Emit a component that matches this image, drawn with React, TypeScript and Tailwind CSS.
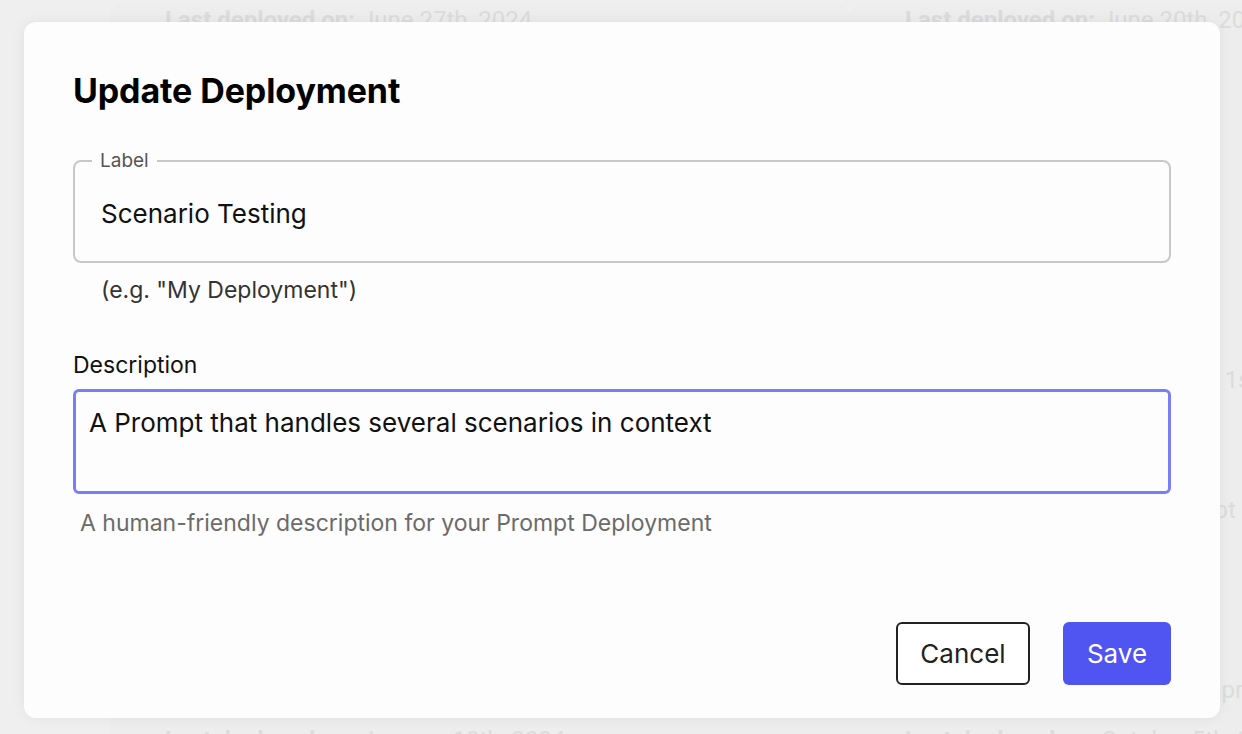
import React from "react";

const bgText = "text-[24px] leading-[32px] text-[#dcdcdc] font-['Roboto',sans-serif] whitespace-nowrap";

function Backdrop() {
  return (
    <div className="absolute inset-0 overflow-hidden bg-[#efefef]">
      <div className="grid grid-cols-[740px_740px] pl-[110px] mt-[4px]">
        <div className="flex flex-col justify-between h-[752px] pl-[55px] rounded-xl bg-[#ededed]">
          <p className={bgText}>
            <span className="font-bold">Last deployed on:</span> June 27th, 2024
          </p>
          <p className={bgText}>
            <span className="font-bold">Last deployed on:</span> January 18th, 2024
          </p>
        </div>
        <div className="flex flex-col h-[752px] pl-[55px] rounded-xl bg-[#ededed]">
          <p className={bgText}>
            <span className="font-bold">Last deployed on:</span> June 20th, 2024
          </p>
          <p className={`mt-[328px] ${bgText}`}>Prompt deployed on February 1st</p>
          <p className={`mt-[98px] ${bgText}`}>Customer support chat Prompt</p>
          <p className={`mt-[148px] ${bgText}`}>Answers questions about the product</p>
          <p className={`mt-auto ${bgText}`}>
            <span className="font-bold">Last deployed on:</span> October 5th, 2024
          </p>
        </div>
      </div>
    </div>
  );
}

function UpdateDeploymentModal() {
  return (
    <div className="relative z-10 ml-[24px] mr-[22px] mt-[22px] h-[696px] rounded-[12px] bg-[#fdfdfd] px-[49px] pt-[49px] pb-[33px] shadow-[0_0_14px_rgba(0,0,0,0.06)] flex flex-col">
      <h2 className="text-[34px] font-bold leading-[40px] text-black tracking-[-0.1px]">
        Update Deployment
      </h2>

      <fieldset className="mt-[40px] h-[112px] rounded-[8px] border-2 border-[#c8c8c8] px-0">
        <legend className="ml-[17px] px-[8px] text-[19px] leading-[20px] text-[#555]">
          Label
        </legend>
        <div className="flex h-[84px] items-center pl-[26px] text-[26px] text-[#111]">
          Scenario Testing
        </div>
      </fieldset>
      <p className="mt-[13px] pl-[28px] text-[23px] leading-[28px] text-[#333]">
        (e.g. "My Deployment")
      </p>

      <label className="mt-[47px] text-[23px] leading-[28px] text-[#111]">Description</label>
      <div className="mt-[10px] h-[105px] rounded-[6px] border-[3px] border-[#7a7ef4] px-[13px] pt-[15px] text-[26px] leading-[32px] text-[#111]">
        A Prompt that handles several scenarios in context
      </div>
      <p className="mt-[15px] pl-[7px] text-[23px] leading-[28px] text-[#6b6b6b]">
        A human-friendly description for your Prompt Deployment
      </p>

      <div className="mt-auto flex justify-end gap-[33px]">
        <button className="h-[63px] w-[134px] rounded-[6px] border-2 border-[#222] bg-white text-[26px] text-[#222]">
          Cancel
        </button>
        <button className="h-[63px] w-[108px] rounded-[6px] bg-[#5055f1] text-[26px] text-white">
          Save
        </button>
      </div>
    </div>
  );
}

export default function App() {
  return (
    <div className="relative h-[734px] w-[1242px] overflow-hidden font-['Inter',sans-serif]">
      <Backdrop />
      <div className="relative pt-px -mt-px">
        <UpdateDeploymentModal />
      </div>
    </div>
  );
}
